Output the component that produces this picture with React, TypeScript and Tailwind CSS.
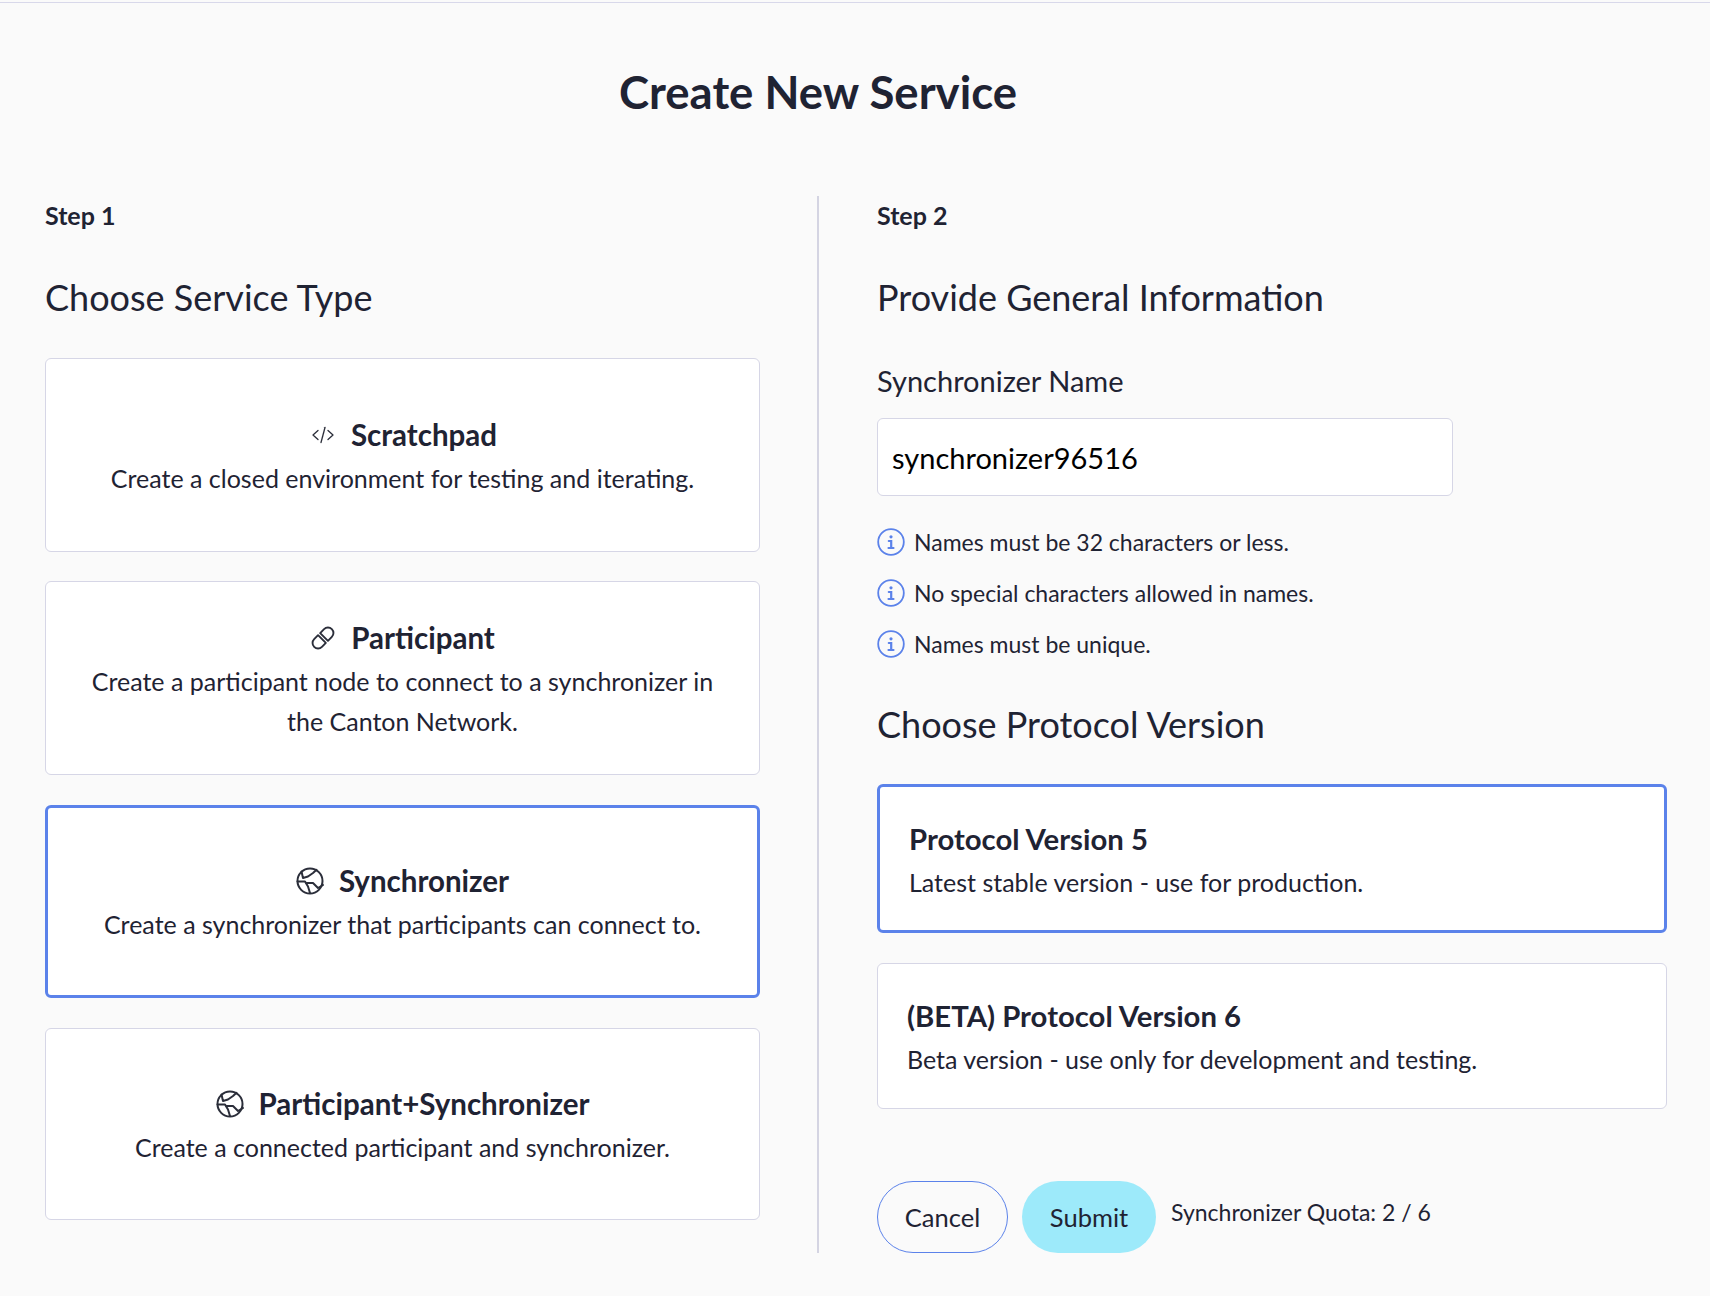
import type { ReactNode } from "react";

function CodeIcon() {
  return (
    <svg className="shrink-0" width="24" height="24" viewBox="0 0 24 24" fill="none" stroke="#2b2e3a" strokeWidth="1.3" strokeLinecap="round" strokeLinejoin="round">
      <path d="M7 7.5 2 12l5 4.5" />
      <path d="M17 7.5l5 4.5-5 4.5" />
      <path d="M14 4.5 10 19.5" />
    </svg>
  );
}

function LinkIcon() {
  return (
    <svg className="shrink-0" width="26" height="26" viewBox="5 4.500 26 26" fill="none" stroke="#2b2e3a" strokeWidth="1.9" strokeLinecap="round" strokeLinejoin="round">
      <g transform="rotate(-45 18 17.500)">
        <path d="M19.500 12H25a5.500 5.500 0 0 1 0 11h-5.500z" />
        <path d="M16.500 12H11a5.500 5.500 0 0 0 0 11h5.500z" />
      </g>
    </svg>
  );
}

function GlobeIcon() {
  return (
    <svg className="shrink-0" width="28" height="28" viewBox="0 0 28 28" fill="none" stroke="#2b2e3a" strokeWidth="2" strokeLinecap="round" strokeLinejoin="round">
      <circle cx="14" cy="14" r="12.500" />
      <path d="M5.500 4.500 7 11l5-1.500L17 6l3.500-3.200" />
      <path d="M1.500 14.500H9l3 5 2 6.500" />
      <path d="M10.500 16H17l5 5 5-3" />
    </svg>
  );
}

function InfoIcon() {
  return (
    <svg className="shrink-0" width="28" height="28" viewBox="0 0 28 28" fill="none" stroke="#5b82ea" strokeLinecap="round">
      <circle cx="14" cy="14" r="12.800" strokeWidth="1.800" />
      <circle cx="14" cy="8.800" r="1.600" fill="#5b82ea" stroke="none" />
      <path d="M11.800 13h2.400v7M11.500 20h5" strokeWidth="2.200" />
    </svg>
  );
}

function ServiceCard({
  icon,
  title,
  selected,
  className,
  gap = "gap-[15px]",
  children,
}: {
  icon: ReactNode;
  title: string;
  selected?: boolean;
  className: string;
  gap?: string;
  children: ReactNode;
}) {
  return (
    <div
      className={`flex flex-col items-center justify-center rounded-[6px] bg-white px-[30px] text-center ${className} ${
        selected ? "border-[3px] border-[#5b82ea]" : "border border-[#d6d6e6]"
      }`}
    >
      <div className={`flex items-center ${gap} text-[29.5px] leading-[40px] font-bold text-[#1f2333]`}>
        {icon}
        {title}
      </div>
      <p className="mt-[3px] text-[25px] leading-[40px] text-[#1f2333]">{children}</p>
    </div>
  );
}

function ProtocolCard({
  title,
  desc,
  selected,
}: {
  title: string;
  desc: string;
  selected?: boolean;
}) {
  return (
    <div
      className={`flex flex-col justify-center rounded-[6px] bg-white ${
        selected
          ? "h-[149px] border-[3px] border-[#5b82ea] pt-[4px] pl-[29px]"
          : "h-[146px] border border-[#d6d6e6] pt-[2px] pl-[29px]"
      }`}
    >
      <div className="text-[29.3px] leading-[40px] font-bold text-[#1f2333]">{title}</div>
      <p className="mt-[3px] text-[25px] leading-[40px] text-[#1f2333]">{desc}</p>
    </div>
  );
}

function Hint({ children }: { children: string }) {
  return (
    <div className="flex h-[28px] items-center gap-[9px] text-[23px] text-[#1f2333]">
      <InfoIcon />
      {children}
    </div>
  );
}

export default function App() {
  return (
    <div className="min-h-[1296px] bg-[#fafafa] font-['Lato',sans-serif] text-[#1f2333]">
      <div className="h-[3px] border-b border-[#d8d8ea]" />
      <h1 className="mt-[61px] w-[1636px] text-center text-[45.5px] leading-[56px] font-bold">Create New Service</h1>
      <div className="mt-[76px] flex pl-[45px]">
        <div className="flex w-[715px] shrink-0 flex-col pt-[3px]">
          <div className="text-[25px] leading-[32px] font-bold">Step 1</div>
          <h2 className="mt-[41px] text-[36px] leading-[50px]">Choose Service Type</h2>
          <div className="mt-[36px] flex flex-col">
            <ServiceCard className="h-[194px] pt-[3px] pl-[33px]" icon={<CodeIcon />} title="Scratchpad" gap="gap-[16px]">
              <span className="-ml-[3px]">Create a closed environment for testing and iterating.</span>
            </ServiceCard>
            <ServiceCard className="mt-[29px] h-[194px] pt-[3px]" icon={<LinkIcon />} title="Participant">
              Create a participant node to connect to a synchronizer in the Canton Network.
            </ServiceCard>
            <ServiceCard className="mt-[30px] h-[193px] pt-[1px]" icon={<GlobeIcon />} title="Synchronizer" selected>
              Create a synchronizer that participants can connect to.
            </ServiceCard>
            <ServiceCard className="mt-[30px] h-[192px] pt-[3px]" icon={<GlobeIcon />} title="Participant+Synchronizer">
              Create a connected participant and synchronizer.
            </ServiceCard>
          </div>
        </div>
        <div className="ml-[57px] h-[1057px] w-[2px] shrink-0 bg-[#d4d4e2]" />
        <div className="ml-[58px] flex w-[790px] shrink-0 flex-col pt-[3px]">
          <div className="text-[25px] leading-[32px] font-bold">Step 2</div>
          <h2 className="mt-[41px] text-[36px] leading-[50px]">Provide General Information</h2>
          <label className="mt-[39px] text-[29px] leading-[40px]">Synchronizer Name</label>
          <input
            readOnly
            value="synchronizer96516"
            className="mt-[17px] h-[78px] w-[576px] rounded-[6px] border border-[#d6d6e6] bg-white px-[14px] text-[29px] text-black outline-none"
          />
          <div className="mt-[32px] flex flex-col gap-[23px]">
            <Hint>Names must be 32 characters or less.</Hint>
            <Hint>No special characters allowed in names.</Hint>
            <Hint>Names must be unique.</Hint>
          </div>
          <h2 className="mt-[41px] text-[36px] leading-[50px]">Choose Protocol Version</h2>
          <div className="mt-[35px] flex flex-col gap-[30px]">
            <ProtocolCard selected title="Protocol Version 5" desc="Latest stable version - use for production." />
            <ProtocolCard title="(BETA) Protocol Version 6" desc="Beta version - use only for development and testing." />
          </div>
          <div className="mt-[72px] flex items-start">
            <button className="h-[72px] w-[131px] rounded-[36px] border border-[#5b82ea] text-[25.5px] text-[#1f2333]">Cancel</button>
            <button className="ml-[14px] h-[72px] w-[134px] rounded-[36px] bg-[#9deafa] text-[25.5px] text-[#1f2333]">Submit</button>
            <span className="mt-[15px] ml-[15px] text-[23px] leading-[32px]">Synchronizer Quota: 2 / 6</span>
          </div>
        </div>
      </div>
    </div>
  );
}
